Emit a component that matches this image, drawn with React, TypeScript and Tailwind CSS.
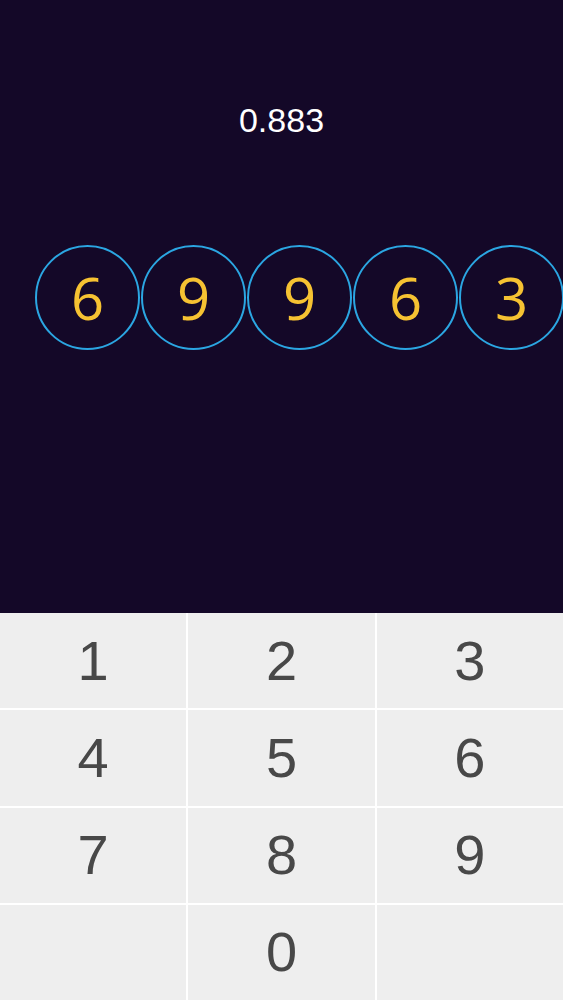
const digits = [6, 9, 9, 6, 3];
const keys = ["1", "2", "3", "4", "5", "6", "7", "8", "9", "", "0", ""];

function DigitBall({ value }: { value: number }) {
  return (
    <div className="flex h-[105px] w-[105px] shrink-0 items-center justify-center rounded-full border-[2.5px] border-[#2ba6e2]">
      <span
        className="text-[58px] leading-none text-[#f6c232]"
        style={{ fontFamily: '"Open Sans", "Noto Sans", sans-serif' }}
      >
        {value}
      </span>
    </div>
  );
}

export default function App() {
  return (
    <div className="flex h-[1000px] w-[563px] flex-col overflow-hidden bg-white" style={{ fontFamily: '"Liberation Sans", Arial, sans-serif' }}>
      <div className="flex h-[613px] flex-col bg-[#140828]">
        <div className="pt-[101px] text-center text-[34px] leading-[39px] text-white">0.883</div>
        <div className="mt-[105px] flex gap-[1px] pl-[35px]">
          {digits.map((d, i) => (
            <DigitBall key={i} value={d} />
          ))}
        </div>
      </div>
      <div className="grid flex-1 grid-cols-3 grid-rows-4 gap-[2px] bg-white">
        {keys.map((k, i) => (
          <div key={i} className="flex items-center justify-center bg-[#eeeeee] text-[56px] text-[#484848]">
            {k}
          </div>
        ))}
      </div>
    </div>
  );
}
